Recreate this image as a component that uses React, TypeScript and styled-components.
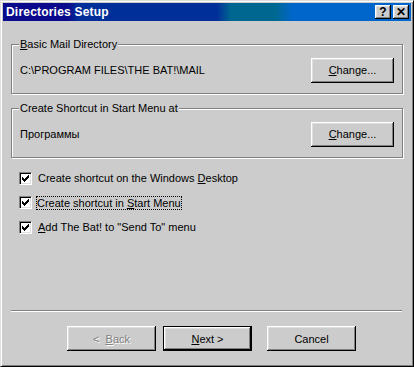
import React from "react"
import styled, { createGlobalStyle } from "styled-components"

const Global = createGlobalStyle`
  html, body { margin: 0; padding: 0; background: #cccccc; }
  body { font-family: "Liberation Sans", Arial, sans-serif; font-size: 11px; color: #000; }
`

const Window = styled.div`
  width: 414px;
  height: 367px;
  box-sizing: border-box;
  background: #cccccc;
  border-top: 1px solid #dfdfdf;
  border-left: 1px solid #dfdfdf;
  border-right: 1px solid #000;
  border-bottom: 1px solid #000;
  box-shadow: inset 1px 1px 0 #fff, inset -1px -1px 0 #808080;
  padding: 2px;
  display: flex;
  flex-direction: column;
`

const TitleBar = styled.div`
  height: 18px;
  display: flex;
  align-items: center;
  padding: 0 2px 0 3px;
  background: linear-gradient(
    to right,
    #0a0a8c 0px,
    #0a0a8c 64px,
    #002f9a 76px,
    #002f9a 214px,
    #006890 228px,
    #006890 272px,
    #0066cc 290px,
    #0066cc 100%
  );
`

const Title = styled.span`
  flex: 1;
  color: #fff;
  font-weight: bold;
  font-size: 12px;
  letter-spacing: 0.2px;
`

const CapButton = styled.button`
  width: 16px;
  height: 14px;
  margin-left: 2px;
  padding: 0;
  box-sizing: border-box;
  background: #cccccc;
  border: none;
  box-shadow: inset -1px -1px 0 #000, inset 1px 1px 0 #fff, inset -2px -2px 0 #808080, inset 2px 2px 0 #dfdfdf;
  display: flex;
  align-items: center;
  justify-content: center;
  font-family: "Liberation Sans", Arial, sans-serif;
  font-weight: bold;
  font-size: 12px;
  line-height: 1;
  color: #000;
`

const Body = styled.div`
  flex: 1;
  display: flex;
  flex-direction: column;
  padding: 23px 8px 0 8px;
`

const Group = styled.div`
  position: relative;
  height: 50px;
  box-sizing: border-box;
  border: 1px solid #808080;
  box-shadow: inset 1px 1px 0 #fff, 1px 1px 0 #fff;
  display: flex;
  align-items: center;
  justify-content: space-between;
  padding: 2px 8px 0 8px;
  margin-bottom: 14px;
`

const Legend = styled.span`
  position: absolute;
  top: -7px;
  left: 7px;
  padding: 0 1px;
  line-height: 13px;
  background: #cccccc;
`

const Value = styled.span`
  margin-top: -1px;
`

const Button = styled.button<{ $default?: boolean; $width?: number }>`
  width: ${(p) => p.$width ?? 89}px;
  height: 25px;
  padding: 0;
  box-sizing: border-box;
  background: #cccccc;
  font-family: "Liberation Sans", Arial, sans-serif;
  font-size: 11px;
  color: #000;
  border: ${(p) => (p.$default ? "1px solid #000" : "none")};
  box-shadow: inset -1px -1px 0 #000, inset 1px 1px 0 #fff, inset -2px -2px 0 #808080, inset 2px 2px 0 #dfdfdf;
  &:disabled {
    color: #808080;
    text-shadow: 1px 1px 0 #fff;
  }
`

const Checks = styled.div`
  display: flex;
  flex-direction: column;
  margin-top: -6px;
  padding-left: 8px;
`

const CheckRow = styled.label`
  height: 24.5px;
  display: flex;
  align-items: center;
`

const Box = styled.span`
  width: 13px;
  height: 13px;
  box-sizing: border-box;
  background: #fff;
  border-top: 1px solid #808080;
  border-left: 1px solid #808080;
  border-right: 1px solid #fff;
  border-bottom: 1px solid #fff;
  box-shadow: inset 1px 1px 0 #000, inset -1px -1px 0 #dfdfdf;
  display: flex;
  align-items: center;
  justify-content: center;
  margin-right: 5px;
`

const CheckText = styled.span<{ $focus?: boolean }>`
  padding: 1px 1px;
  outline: ${(p) => (p.$focus ? "1px dotted #000" : "none")};
  outline-offset: -1px;
  margin-left: ${(p) => (p.$focus ? "-1px" : "0")};
`

const Separator = styled.div`
  margin-top: auto;
  margin-right: 1px;
  height: 1px;
  background: #808080;
  border-bottom: 1px solid #fff;
`

const Footer = styled.div`
  display: flex;
  padding: 14px 0 13px 56px;
`

const Spacer = styled.span<{ $w: number }>`
  width: ${(p) => p.$w}px;
`

const Tick = () => (
  <svg width="7" height="7" viewBox="0 0 7 7">
    <path d="M0 2h1v1h1v1h1V3h1V2h1V1h1V0h1v3H6v1H5v1H4v1H3v1H2V6H1V5H0z" fill="#000" />
  </svg>
)

const Check = ({ children, focus }: { children: React.ReactNode; focus?: boolean }) => (
  <CheckRow>
    <Box>
      <Tick />
    </Box>
    <CheckText $focus={focus}>{children}</CheckText>
  </CheckRow>
)

export default function App() {
  return (
    <>
      <Global />
      <Window>
        <TitleBar>
          <Title>Directories Setup</Title>
          <CapButton>?</CapButton>
          <CapButton>✕</CapButton>
        </TitleBar>
        <Body>
          <Group>
            <Legend>
              <u>B</u>asic Mail Directory
            </Legend>
            <Value>C:\PROGRAM FILES\THE BAT!\MAIL</Value>
            <Button $width={83}>
              <u>C</u>hange...
            </Button>
          </Group>
          <Group>
            <Legend>Create Shortcut in Start Menu at</Legend>
            <Value>Программы</Value>
            <Button $width={83}>
              <u>C</u>hange...
            </Button>
          </Group>
          <Checks>
            <Check>
              Create shortcut on the Windows <u>D</u>esktop
            </Check>
            <Check focus>
              Create shortcut in <u>S</u>tart Menu
            </Check>
            <Check>
              <u>A</u>dd The Bat! to "Send To" menu
            </Check>
          </Checks>
          <Separator />
          <Footer>
            <Button disabled>
              &lt;&nbsp; <u>B</u>ack
            </Button>
            <Spacer $w={7} />
            <Button $default>
              <u>N</u>ext &gt;
            </Button>
            <Spacer $w={15} />
            <Button>Cancel</Button>
          </Footer>
        </Body>
      </Window>
    </>
  )
}
